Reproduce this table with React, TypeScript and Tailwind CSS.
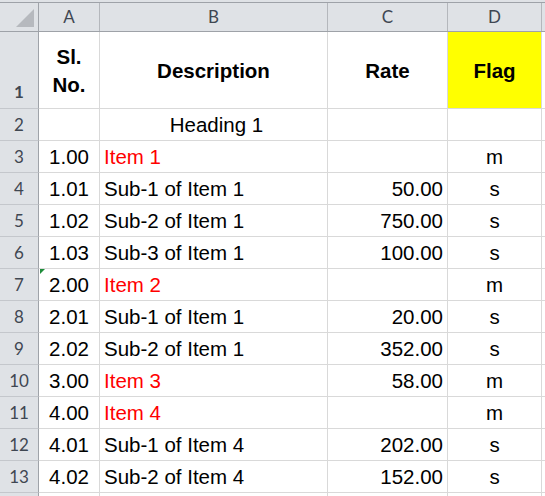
import type { ReactNode } from 'react'

type Row = {
  n: number
  a: string
  b: string
  c: string
  d: string
  red?: boolean
  center?: boolean
  mark?: boolean
}

const rows: Row[] = [
  { n: 2, a: '', b: 'Heading 1', c: '', d: '', center: true },
  { n: 3, a: '1.00', b: 'Item 1', c: '', d: 'm', red: true },
  { n: 4, a: '1.01', b: 'Sub-1 of Item 1', c: '50.00', d: 's' },
  { n: 5, a: '1.02', b: 'Sub-2 of Item 1', c: '750.00', d: 's' },
  { n: 6, a: '1.03', b: 'Sub-3 of Item 1', c: '100.00', d: 's' },
  { n: 7, a: '2.00', b: 'Item 2', c: '', d: 'm', red: true, mark: true },
  { n: 8, a: '2.01', b: 'Sub-1 of Item 1', c: '20.00', d: 's' },
  { n: 9, a: '2.02', b: 'Sub-2 of Item 1', c: '352.00', d: 's' },
  { n: 10, a: '3.00', b: 'Item 3', c: '58.00', d: 'm', red: true },
  { n: 11, a: '4.00', b: 'Item 4', c: '', d: 'm', red: true },
  { n: 12, a: '4.01', b: 'Sub-1 of Item 4', c: '202.00', d: 's' },
  { n: 13, a: '4.02', b: 'Sub-2 of Item 4', c: '152.00', d: 's' },
]

const hdrFont = { fontFamily: 'Lato, "Open Sans", sans-serif' }
const cellFont = { fontFamily: '"Liberation Sans", Arial, sans-serif' }

function ColHead({ w, children }: { w: string; children?: ReactNode }) {
  return (
    <div className={`${w} flex shrink-0 items-center justify-center border-r border-[#b4b7bc] text-[17px] text-[#3f4752]`}>
      {children}
    </div>
  )
}

function RowHead({ children, end }: { children?: ReactNode; end?: boolean }) {
  return (
    <div
      style={hdrFont}
      className={`flex w-[39px] shrink-0 justify-center border-r border-b border-r-[#9fa3a9] border-b-[#c4c7cc] bg-[#dfe2e6] text-[17px] text-[#3f4752] ${end ? 'items-end pb-[2px]' : 'items-center'}`}
    >
      {children}
    </div>
  )
}

export default function App() {
  return (
    <div className="h-[496px] w-[545px] overflow-hidden bg-white" style={cellFont}>
      {/* column headers */}
      <div className="h-[2px] bg-[#dfe2e6]" />
      <div style={hdrFont} className="flex h-[30px] border-t border-b border-t-[#9ea2a8] border-b-[#9ea2a8] bg-[#dfe2e6]">
        <div className="relative w-[39px] shrink-0 border-r border-[#9fa3a9]">
          <svg width="18" height="18" viewBox="0 0 18 18" className="absolute left-[16px] top-[6px]">
            <polygon points="18,0 18,18 0,18" fill="#b6b9be" />
          </svg>
        </div>
        <ColHead w="w-[61px]">A</ColHead>
        <ColHead w="w-[228px]">B</ColHead>
        <ColHead w="w-[120px]">C</ColHead>
        <ColHead w="w-[94px]">D</ColHead>
        <div className="flex-1" />
      </div>

      {/* row 1 */}
      <div className="flex h-[77px] text-[20.5px] font-bold leading-[28px] text-black">
        <RowHead end>1</RowHead>
        <div className="flex w-[61px] shrink-0 items-center justify-center border-r border-b border-[#d9d9d9] pt-[2px] text-center">
          Sl.
          <br />
          No.
        </div>
        <div className="flex w-[228px] shrink-0 items-center justify-center border-r border-b border-[#d9d9d9] pt-[2px]">Description</div>
        <div className="flex w-[120px] shrink-0 items-center justify-center border-r border-b border-[#d9d9d9] pt-[2px]">Rate</div>
        <div className="flex w-[94px] shrink-0 items-center justify-center border-r border-b border-r-[#d9d9d9] border-b-[#d9d9d9] bg-[#ffff00] pt-[2px]">Flag</div>
        <div className="flex-1 border-b border-[#d9d9d9]" />
      </div>

      {rows.map((r) => (
        <div key={r.n} className="flex h-[32px] text-[20.5px] text-black">
          <RowHead>{r.n}</RowHead>
          <div className="relative flex w-[61px] shrink-0 items-center justify-center border-r border-b border-[#d9d9d9] pt-[1px]">
            {r.mark ? (
              <svg width="5" height="5" viewBox="0 0 5 5" className="absolute left-[1px] top-0">
                <polygon points="0,0 5,0 0,5" fill="#1e8c3a" />
              </svg>
            ) : null}
            {r.a}
          </div>
          <div
            className={`flex w-[228px] shrink-0 items-center border-r border-b border-[#d9d9d9] pt-[1px] ${r.center ? 'justify-center pl-[6px]' : 'pl-[4px]'} ${r.red ? 'text-[#ff0000]' : ''}`}
          >
            {r.b}
          </div>
          <div className="flex w-[120px] shrink-0 items-center justify-end border-r border-b border-[#d9d9d9] pr-[4px] pt-[1px]">{r.c}</div>
          <div className="flex w-[94px] shrink-0 items-center justify-center border-r border-b border-[#d9d9d9] pt-[1px]">{r.d}</div>
          <div className="flex-1 border-b border-[#d9d9d9]" />
        </div>
      ))}

      <div className="flex h-[32px]">
        <RowHead />
        <div className="w-[61px] shrink-0 border-r border-[#d9d9d9]" />
        <div className="w-[228px] shrink-0 border-r border-[#d9d9d9]" />
        <div className="w-[120px] shrink-0 border-r border-[#d9d9d9]" />
        <div className="w-[94px] shrink-0 border-r border-[#d9d9d9]" />
      </div>
    </div>
  )
}
